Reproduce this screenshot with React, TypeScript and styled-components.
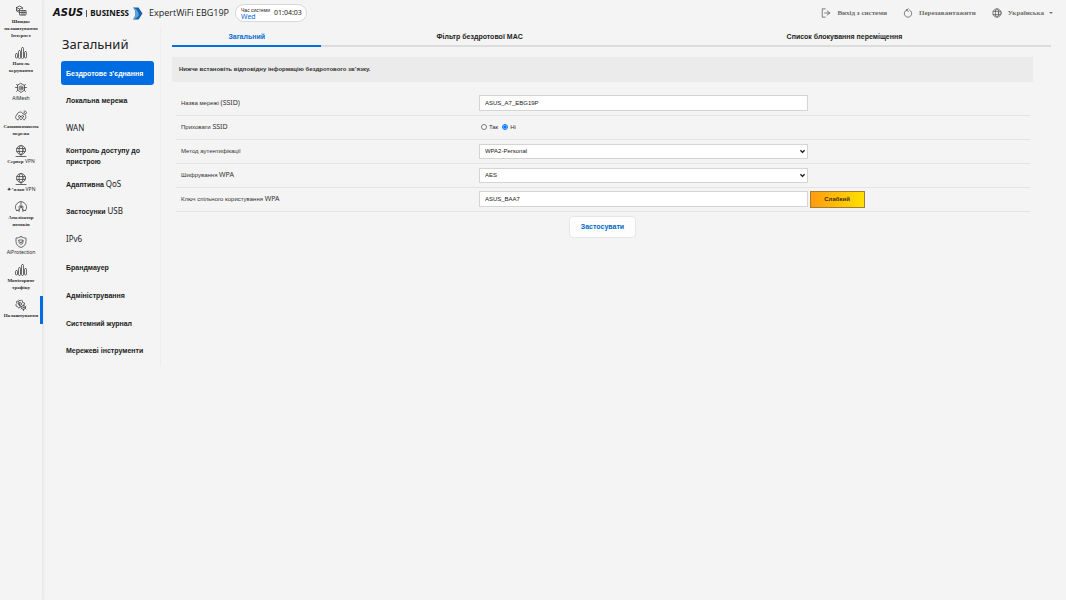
import React from 'react';
import styled, { createGlobalStyle } from 'styled-components';

const latin = '"Noto Sans", "Open Sans", sans-serif';
const sans = '"Liberation Sans", Arial, sans-serif';
const serif = '"Liberation Serif", "Times New Roman", serif';

const GlobalStyle = createGlobalStyle`
  *, *::before, *::after { box-sizing: border-box; }
  body { margin: 0; background: #f4f4f4; color: #222; font-family: ${sans}; }
  a { color: inherit; text-decoration: none; }
`;

const Page = styled.div`
  display: flex;
  min-height: 100vh;
`;

const Rail = styled.nav`
  display: flex;
  flex-direction: column;
  gap: 8px;
  flex: none;
  width: 42px;
  padding-top: 5px;
  background: #f4f4f4;
  box-shadow: 1px 0 3px #e2e2e2;
`;

const RailLink = styled.a<{ $latin?: boolean; $active?: boolean }>`
  position: relative;
  display: flex;
  flex-direction: column;
  align-items: center;
  gap: 1px;
  font: ${p => (p.$latin ? `400 5px/7px ${latin}` : `700 5px/7px ${serif}`)};
  text-align: center;
  white-space: nowrap;
  color: #2a2a2a;
  svg { width: 12px; height: 12px; }
  &::after {
    content: '';
    display: ${p => (p.$active ? 'block' : 'none')};
    position: absolute;
    right: -1px;
    top: -3px;
    width: 3px;
    height: 28px;
    background: #006ce1;
  }
`;

const RailText = styled.span`
  display: block;
`;

const Main = styled.div`
  flex: 1;
  min-width: 0;
`;

const Header = styled.header`
  display: flex;
  align-items: center;
  height: 27px;
  padding: 0 13px 1px 11px;
`;

const Logo = styled.div`
  display: flex;
  align-items: center;
  color: #111;
  svg { width: 11px; height: 13px; margin-left: 3px; }
`;

const LogoMark = styled.span`
  font: italic 700 10px/12px "DejaVu Sans", sans-serif;
`;

const LogoLine = styled.span`
  width: 1px;
  height: 7px;
  margin: 0 3px;
  background: #555;
`;

const LogoName = styled.span`
  font: 700 8px/12px ${latin};
`;

const Model = styled.h1`
  margin: 0 6px;
  font: 400 9px/14px "Open Sans", ${latin};
`;

const Clock = styled.div`
  display: flex;
  align-items: center;
  gap: 4px;
  height: 18px;
  padding: 0 4px 0 5px;
  border: 1px solid #d8d8d8;
  border-radius: 9px;
  background: #fff;
`;

const ClockLabel = styled.div`
  font: 400 5px/7px ${sans};
`;

const ClockDay = styled.div`
  font: 400 7px/6px ${latin};
  color: #006ce1;
`;

const ClockTime = styled.time`
  font: 400 7px/10px ${latin};
`;

const Actions = styled.div`
  display: flex;
  align-items: center;
  gap: 16px;
  margin-left: auto;
`;

const Action = styled.button`
  display: flex;
  align-items: center;
  gap: 6px;
  padding: 0;
  border: 0;
  background: none;
  color: #6c6c6c;
  font: 700 7px/10px ${serif};
  svg { width: 10px; height: 10px; }
`;

const Caret = styled.span`
  margin-left: -1px;
  border: 2px solid transparent;
  border-top-color: #777;
  border-bottom: 0;
`;

const Body = styled.div`
  display: flex;
`;

const Section = styled.aside`
  flex: none;
  width: 119px;
  height: 339px;
  padding: 9px 6px 0 19px;
  border-right: 1px solid #ededed;
`;

const SectionTitle = styled.h2`
  margin: 0 0 9px 1px;
  font: 400 13px/16px ${latin};
  white-space: nowrap;
`;

const Menu = styled.nav`
  display: flex;
  flex-direction: column;
  justify-content: space-between;
  height: 302px;
`;

const MenuLink = styled.a<{ $active?: boolean }>`
  display: flex;
  align-items: center;
  height: 24px;
  padding: 0 5px;
  border-radius: 3px;
  font: 700 7px/11px ${sans};
  color: ${p => (p.$active ? '#fff' : '#222')};
  background: ${p => (p.$active ? '#006ce1' : 'transparent')};
`;

const Latin = styled.span<{ $size: number }>`
  font-family: ${latin};
  font-size: ${p => p.$size}px;
  font-weight: 400;
  line-height: 1;
`;

const Content = styled.main`
  flex: 1;
  min-width: 0;
  padding: 0 15px 0 11px;
`;

const Tabs = styled.nav`
  display: flex;
  border-bottom: 1px solid #d8d8d8;
`;

const Tab = styled.a<{ $grow: number; $active?: boolean }>`
  flex: ${p => p.$grow} 1 0;
  height: 20px;
  margin-bottom: -1px;
  border-bottom: 2px solid ${p => (p.$active ? '#0070dd' : '#dcdcdc')};
  font: 700 7px/19px ${sans};
  text-align: center;
  color: ${p => (p.$active ? '#0a6cd0' : '#222')};
`;

const Panel = styled.form`
  padding-right: 18px;
`;

const Notice = styled.p`
  margin: 10px 0 9px;
  padding: 0 7px;
  background: #ebebeb;
  color: #333;
  font: 700 6px/25px ${sans};
`;

const Fields = styled.table`
  width: calc(100% - 7px);
  margin-left: 4px;
  border-collapse: collapse;
  table-layout: fixed;
  color: #333;
  font: 400 6px/8px ${sans};
`;

const FieldRow = styled.tr`
  height: 24px;
  border-bottom: 1px solid #e4e4e4;
`;

const FieldName = styled.th`
  width: 35%;
  padding: 0 5px;
  font-weight: 400;
  text-align: left;
`;

const FieldCell = styled.td`
  padding: 0 0 0 4px;
`;

const FieldLine = styled.div`
  display: flex;
  align-items: center;
  gap: 2px;
`;

const TextBox = styled.input`
  width: calc(60% - 2px);
  height: 16px;
  padding: 0 5px;
  border: 1px solid #d4d4d4;
  background: #fff;
  color: #222;
  font: 400 6px/8px ${sans};
`;

const SelectWrap = styled.div`
  position: relative;
  width: calc(60% - 2px);
  svg { position: absolute; right: 3px; top: 5px; width: 5px; height: 5px; pointer-events: none; }
`;

const Select = styled.select`
  display: block;
  appearance: none;
  width: 100%;
  height: 15px;
  padding: 0 5px;
  border: 1px solid #d4d4d4;
  border-radius: 0;
  background: #fff;
  color: #222;
  font: 400 6px/8px ${sans};
`;

const Choice = styled.label`
  display: flex;
  align-items: center;
  gap: 2px;
  margin-left: 2px;
`;

const Radio = styled.input`
  width: 6px;
  height: 6px;
  margin: 0;
  accent-color: #0075ff;
`;

const Strength = styled.output`
  width: 55px;
  height: 17px;
  border: 1px solid #a08030;
  background: linear-gradient(90deg, #ff9c10, #ffe000);
  font: 700 6px/15px ${sans};
  text-align: center;
  color: #3a2a00;
`;

const Submit = styled.button`
  display: block;
  width: 67px;
  height: 22px;
  margin: 4px auto 0;
  border: 1px solid #e6e6e6;
  border-radius: 4px;
  background: #fdfdfd;
  color: #006ac8;
  font: 700 7px/10px ${sans};
`;

const Icon = ({ children }: { children: React.ReactNode }) => (
  <svg viewBox="0 0 24 24" fill="none" stroke="#444" strokeWidth="1.6" strokeLinecap="round" strokeLinejoin="round" aria-hidden="true">
    {children}
  </svg>
);

const icons = {
  setup: (
    <Icon>
      <path d="M3 5 9 2l6 3v3M3 5v7l6 3M3 5l6 3v3M9 8l5-2M3 9l6 3" />
      <path d="M10 11h12v9H10zM10 15h12M14 11v9M18 11v9" />
    </Icon>
  ),
  bars: (
    <Icon>
      <rect x="1" y="13" width="4" height="9" rx="2" />
      <rect x="7" y="7" width="4" height="16" rx="2" />
      <rect x="13" y="1" width="4" height="22" rx="2" />
      <rect x="19" y="9" width="4" height="13" rx="2" />
    </Icon>
  ),
  mesh: (
    <Icon>
      <path d="M12 3 19 7v9l-7 5-7-5V7z" />
      <circle cx="12" cy="12" r="4" /><circle cx="12" cy="12" r="1" />
      <path d="M3 5l3 2M21 5l-3 2M3 19l3-3M21 19l-3-3M1 11h4M19 11h4" />
    </Icon>
  ),
  cloud: (
    <Icon>
      <path d="M5 19C0 19 0 11 4 10c1-7 10-8 12-2 6-1 8 9 3 11" />
      <circle cx="9" cy="13" r="2" /><circle cx="15" cy="13" r="2" />
      <path d="M6 20c1-4 5-4 6 0 1-4 5-4 6 0M18 5c2 0 3 1 3 3M18 2c4 0 6 2 6 5" />
    </Icon>
  ),
  vpn: (
    <Icon>
      <circle cx="12" cy="10" r="9" />
      <ellipse cx="12" cy="10" rx="4" ry="9" />
      <path d="M4 7h16M4 13h16M12 19v3M2 23h20" />
    </Icon>
  ),
  analyzer: (
    <Icon>
      <path d="M3 19a11 11 0 1 1 18 0M7 12a6 6 0 0 1 10 0M12 2v5" />
      <circle cx="12" cy="12" r="2" />
      <path d="M3 19h4l2-5M21 19h-4l-2-5M8 21l1-4M16 21l-1-4" />
    </Icon>
  ),
  shield: (
    <Icon>
      <path d="M12 1c3 2 6 3 10 3v7c0 6-4 10-10 12C6 21 2 17 2 11V4c4 0 7-1 10-3z" />
      <path d="M8 8h8v4c0 3-2 4-4 5-2-1-4-2-4-5zM10 12l2 2 3-4" />
    </Icon>
  ),
  gears: (
    <Icon>
      <path d="m8 2 2 2 3-2 2 2 0 3 4 1 0 3-3 2M10 17l-3 1-2-3-3-1 0-3 2-2-1-4 3-1z" />
      <circle cx="10" cy="10" r="3" />
      <circle cx="17" cy="17" r="4" /><circle cx="17" cy="17" r="1" />
      <path d="M17 12v1M17 21v2M22 14l-1 1M12 20l1-1M22 20l-1-1M12 15l1 0" />
    </Icon>
  ),
};

const rail: { icon: keyof typeof icons; lines: string[]; latin?: boolean; active?: boolean }[] = [
  { icon: 'setup', lines: ['Швидке', 'налаштування', 'Інтернет'] },
  { icon: 'bars', lines: ['Панель', 'керування'] },
  { icon: 'mesh', lines: ['AiMesh'], latin: true },
  { icon: 'cloud', lines: ['Самовизначена', 'мережа'] },
  { icon: 'vpn', lines: ['Сервер VPN'] },
  { icon: 'vpn', lines: ['✦ ’ялан VPN'] },
  { icon: 'analyzer', lines: ['Аналізатор', 'потоків'] },
  { icon: 'shield', lines: ['AiProtection'], latin: true },
  { icon: 'bars', lines: ['Моніторинг', 'трафіку'] },
  { icon: 'gears', lines: ['Налаштування'], active: true },
];

const menu = [
  'Бездротове з’єднання', 'Локальна мережа', 'WAN', 'Контроль доступу до пристрою',
  'Адаптивна QoS', 'Застосунки USB', 'IPv6', 'Брандмауер', 'Адміністрування',
  'Системний журнал', 'Мережеві інструменти',
];

/* Latin words take the lighter Latin face; Cyrillic keeps the surrounding one. */
const Mixed = ({ text, size }: { text: string; size: number }) => (
  <span>
    {text.split(/([(]?[A-Za-z][A-Za-z0-9]+[)]?)/).map((part, i) => (i % 2 ? <Latin key={i} $size={size}>{part}</Latin> : part))}
  </span>
);

const SelectArrow = () => (
  <svg viewBox="0 0 12 10" fill="none" stroke="#111" strokeWidth="3" aria-hidden="true"><path d="m1 2 5 5 5-5" /></svg>
);

export default function App() {
  return (
    <>
      <GlobalStyle />
      <Page>
        <Rail>
          {rail.map((item, i) => (
            <RailLink href="#" key={i} $latin={item.latin} $active={item.active}>
              {icons[item.icon]}
              <RailText>
                {item.lines.map(line => <RailText key={line}><Mixed text={line} size={5} /></RailText>)}
              </RailText>
            </RailLink>
          ))}
        </Rail>
        <Main>
          <Header>
            <Logo>
              <LogoMark>ASUS</LogoMark>
              <LogoLine />
              <LogoName>BUSINESS</LogoName>
              <svg viewBox="0 0 22 26" aria-hidden="true">
                <path d="M2 1h11l8 12-8 12H2c6-6 7-18 0-24z" fill="#1761ad" />
                <path d="M2 1c9 3 13 12 11 17-3 4-7 6-11 7 6-6 7-18 0-24z" fill="#5aa3dc" />
              </svg>
            </Logo>
            <Model>ExpertWiFi EBG19P</Model>
            <Clock>
              <div>
                <ClockLabel>Час системи</ClockLabel>
                <ClockDay>Wed</ClockDay>
              </div>
              <ClockTime>01:04:03</ClockTime>
            </Clock>
            <Actions>
              <Action type="button">
                <Icon><path d="M10 2H3v20h7M15 7l6 5-6 5M9 12h12" /></Icon>
                Вихід з системи
              </Action>
              <Action type="button">
                <Icon><path d="M8 5a9 9 0 1 0 8 0M8 5l5-3M8 5l5 3" /></Icon>
                Перезавантажити
              </Action>
              <Action type="button">
                <Icon><circle cx="12" cy="12" r="10" /><ellipse cx="12" cy="12" rx="4" ry="10" /><path d="M3 8h18M3 16h18" /></Icon>
                Українська
                <Caret />
              </Action>
            </Actions>
          </Header>
          <Body>
            <Section>
              <SectionTitle>Загальний</SectionTitle>
              <Menu>
                {menu.map((text, i) => (
                  <MenuLink href="#" key={text} $active={i === 0}><Mixed text={text} size={8} /></MenuLink>
                ))}
              </Menu>
            </Section>
            <Content>
              <Tabs>
                <Tab href="#" $grow={17} $active>Загальний</Tab>
                <Tab href="#" $grow={36}>Фільтр бездротової MAC</Tab>
                <Tab href="#" $grow={47}>Список блокування переміщення</Tab>
              </Tabs>
              <Panel onSubmit={e => e.preventDefault()}>
                <Notice>Нижче встановіть відповідну інформацію бездротового зв’язку.</Notice>
                <Fields>
                  <tbody>
                    <FieldRow>
                      <FieldName scope="row"><label htmlFor="ssid"><Mixed text="Назва мережі (SSID)" size={7} /></label></FieldName>
                      <FieldCell><FieldLine><TextBox id="ssid" defaultValue="ASUS_A7_EBG19P" /></FieldLine></FieldCell>
                    </FieldRow>
                    <FieldRow>
                      <FieldName scope="row"><Mixed text="Приховати SSID" size={7} /></FieldName>
                      <FieldCell>
                        <FieldLine>
                          <Choice><Radio type="radio" name="hide" />Так</Choice>
                          <Choice><Radio type="radio" name="hide" defaultChecked />Ні</Choice>
                        </FieldLine>
                      </FieldCell>
                    </FieldRow>
                    <FieldRow>
                      <FieldName scope="row"><label htmlFor="auth">Метод аутентифікації</label></FieldName>
                      <FieldCell><SelectWrap><Select id="auth"><option>WPA2-Personal</option></Select><SelectArrow /></SelectWrap></FieldCell>
                    </FieldRow>
                    <FieldRow>
                      <FieldName scope="row"><label htmlFor="cipher"><Mixed text="Шифрування WPA" size={7} /></label></FieldName>
                      <FieldCell><SelectWrap><Select id="cipher"><option>AES</option></Select><SelectArrow /></SelectWrap></FieldCell>
                    </FieldRow>
                    <FieldRow>
                      <FieldName scope="row"><label htmlFor="key"><Mixed text="Ключ спільного користування WPA" size={7} /></label></FieldName>
                      <FieldCell><FieldLine><TextBox id="key" defaultValue="ASUS_BAA7" /><Strength htmlFor="key">Слабкий</Strength></FieldLine></FieldCell>
                    </FieldRow>
                  </tbody>
                </Fields>
                <Submit type="submit">Застосувати</Submit>
              </Panel>
            </Content>
          </Body>
        </Main>
      </Page>
    </>
  );
}
